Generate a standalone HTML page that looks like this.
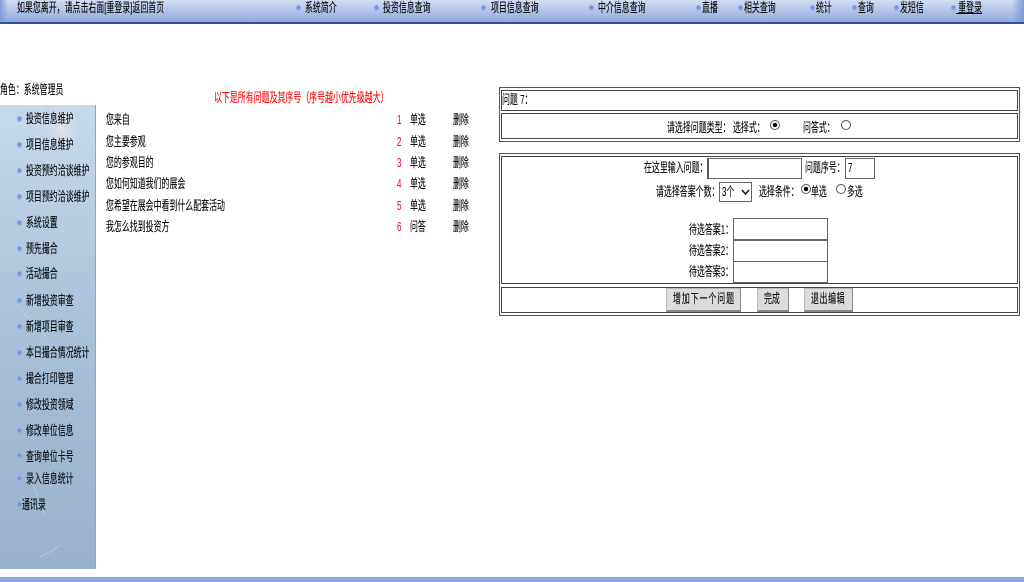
<!DOCTYPE html>
<html lang="zh"><head><meta charset="utf-8"><title>问题</title>
<style>
html,body{margin:0;padding:0;width:1024px;height:582px;overflow:hidden;background:#fff}
body{position:relative;font-family:"Liberation Sans","Noto Sans CJK SC",sans-serif;color:#000}
.t{position:absolute;white-space:nowrap;font-size:13px;line-height:14px;transform-origin:0 50%;transform:scaleX(.61);-webkit-text-stroke:.1px currentColor}
.d{position:absolute;width:5px;height:6px;border-radius:50%;background:radial-gradient(circle at 50% 40%,#6a84dc,#b4c6ec)}
.b{position:absolute;box-sizing:border-box;border:1px solid #444;background:#fff}
.o{position:absolute;box-sizing:border-box;border:1px solid #555}
.i{position:absolute;box-sizing:border-box;background:#fff;border:1px solid #666}
.btn{position:absolute;box-sizing:border-box;background:#dcdcdc;border:1px solid #bbb;border-bottom:2px solid #888;border-right:1px solid #888}
.r{position:absolute;width:10px;height:10px;box-sizing:border-box;border:1px solid #555;border-radius:50%;background:#fff}
.r.c::after{content:"";position:absolute;left:2px;top:2px;width:4px;height:4px;border-radius:50%;background:#000;box-shadow:0 0 1px #000}
</style></head><body>
<div style="position:absolute;left:0;top:0;width:1024px;height:22px;background:linear-gradient(#d3def3,#b4c5ea 45%,#93aade)"></div>
<div style="position:absolute;left:0;top:0;width:8px;height:22px;background:linear-gradient(90deg,#7f9ad8,transparent)"></div>
<div style="position:absolute;left:1012px;top:0;width:12px;height:22px;background:linear-gradient(270deg,#7f9ad8,transparent)"></div>
<div style="position:absolute;left:0;top:22px;width:1024px;height:2px;background:#2f4f9f"></div>
<span class="t" style="left:17px;top:1px">如果您离开，请点击右面[重登录]返回首页</span>
<i class="d" style="left:296px;top:5px"></i><span class="t" style="left:305px;top:1px">系统简介</span>
<i class="d" style="left:374px;top:5px"></i><span class="t" style="left:383px;top:1px">投资信息查询</span>
<i class="d" style="left:481px;top:5px"></i><span class="t" style="left:491px;top:1px">项目信息查询</span>
<i class="d" style="left:589px;top:5px"></i><span class="t" style="left:598px;top:1px">中介信息查询</span>
<i class="d" style="left:696px;top:5px"></i><span class="t" style="left:702px;top:1px">直播</span>
<i class="d" style="left:738px;top:5px"></i><span class="t" style="left:744px;top:1px">相关查询</span>
<i class="d" style="left:810px;top:5px"></i><span class="t" style="left:816px;top:1px">统计</span>
<i class="d" style="left:852px;top:5px"></i><span class="t" style="left:858px;top:1px">查询</span>
<i class="d" style="left:894px;top:5px"></i><span class="t" style="left:900px;top:1px">发短信</span>
<i class="d" style="left:951px;top:5px"></i><span class="t" style="left:956px;top:1px"><u>&nbsp;重登录</u></span>

<span class="t" style="left:0;top:83px">角色：系统管理员</span>
<span class="t" style="left:214px;top:91px;color:#f00">以下是所有问题及其序号（序号越小优先级越大）</span>

<div style="position:absolute;left:0;top:105px;width:96px;height:464px;background:radial-gradient(ellipse 16px 24px at 62px 22px,rgba(240,225,228,.75),transparent),linear-gradient(#c7daec,#a9c2da 45%,#98b1cd);border-right:1px solid #8ea8c4;box-sizing:border-box"></div>
<svg style="position:absolute;left:0;top:105px" width="96" height="464" viewBox="0 0 96 464" fill="none" stroke="#d8e6f2" stroke-opacity=".4"><path d="M0 25C12 18 22 22 32 12M38 0C46 10 50 14 62 18M68 30C72 42 78 48 84 58"/><path d="M22 205C30 218 38 222 46 232M30 370C34 385 40 395 44 410M40 452C46 448 54 446 60 440"/></svg>
<i class="d" style="left:17px;top:116px"></i><span class="t" style="left:26px;top:112px">投资信息维护</span>
<i class="d" style="left:17px;top:142px"></i><span class="t" style="left:26px;top:138px">项目信息维护</span>
<i class="d" style="left:17px;top:168px"></i><span class="t" style="left:26px;top:164px">投资预约洽谈维护</span>
<i class="d" style="left:17px;top:194px"></i><span class="t" style="left:26px;top:190px">项目预约洽谈维护</span>
<i class="d" style="left:17px;top:220px"></i><span class="t" style="left:26px;top:216px">系统设置</span>
<i class="d" style="left:17px;top:246px"></i><span class="t" style="left:26px;top:242px">预先撮合</span>
<i class="d" style="left:17px;top:271px"></i><span class="t" style="left:26px;top:267px">活动撮合</span>
<i class="d" style="left:17px;top:298px"></i><span class="t" style="left:26px;top:294px">新增投资审查</span>
<i class="d" style="left:17px;top:324px"></i><span class="t" style="left:26px;top:320px">新增项目审查</span>
<i class="d" style="left:17px;top:350px"></i><span class="t" style="left:26px;top:346px">本日撮合情况统计</span>
<i class="d" style="left:17px;top:376px"></i><span class="t" style="left:26px;top:372px">撮合打印管理</span>
<i class="d" style="left:17px;top:402px"></i><span class="t" style="left:26px;top:398px">修改投资领域</span>
<i class="d" style="left:17px;top:428px"></i><span class="t" style="left:26px;top:424px">修改单位信息</span>
<i class="d" style="left:17px;top:453px"></i><span class="t" style="left:26px;top:450px">查询单位卡号</span>
<i class="d" style="left:17px;top:476px"></i><span class="t" style="left:26px;top:472px">录入信息统计</span>
<i class="d" style="left:17px;top:502px"></i><span class="t" style="left:22px;top:498px">通讯录</span>

<span class="t" style="left:106px;top:113px">您来自</span>
<span class="t" style="left:106px;top:135px">您主要参观</span>
<span class="t" style="left:106px;top:156px">您的参观目的</span>
<span class="t" style="left:106px;top:177px">您如何知道我们的展会</span>
<span class="t" style="left:106px;top:199px">您希望在展会中看到什么配套活动</span>
<span class="t" style="left:106px;top:220px">我怎么找到投资方</span>

<span class="t" style="left:397px;top:113px;color:#f03">1</span><span class="t" style="left:410px;top:113px">单选</span><span class="t" style="left:453px;top:113px">删除</span>
<span class="t" style="left:397px;top:135px;color:#f03">2</span><span class="t" style="left:410px;top:135px">单选</span><span class="t" style="left:453px;top:135px">删除</span>
<span class="t" style="left:397px;top:156px;color:#f03">3</span><span class="t" style="left:410px;top:156px">单选</span><span class="t" style="left:453px;top:156px">删除</span>
<span class="t" style="left:397px;top:177px;color:#f03">4</span><span class="t" style="left:410px;top:177px">单选</span><span class="t" style="left:453px;top:177px">删除</span>
<span class="t" style="left:397px;top:199px;color:#f03">5</span><span class="t" style="left:410px;top:199px">单选</span><span class="t" style="left:453px;top:199px">删除</span>
<span class="t" style="left:397px;top:220px;color:#f03">6</span><span class="t" style="left:410px;top:220px">问答</span><span class="t" style="left:453px;top:220px">删除</span>

<div class="o" style="left:499px;top:87px;width:521px;height:55px"></div>
<div class="b" style="left:501px;top:90px;width:517px;height:21px"></div>
<div class="b" style="left:501px;top:113px;width:517px;height:26px"></div>
<span class="t" style="left:502px;top:93px">问题 7：</span>
<span class="t" style="left:667px;top:121px">请选择问题类型：</span>
<span class="t" style="left:733px;top:121px">选择式：</span>
<span class="r c" style="left:770px;top:120px"></span>
<span class="t" style="left:803px;top:121px">问答式：</span>
<span class="r" style="left:841px;top:120px"></span>

<div class="o" style="left:499px;top:153px;width:521px;height:163px"></div>
<div class="b" style="left:501px;top:156px;width:517px;height:128px"></div>
<div class="b" style="left:501px;top:287px;width:517px;height:26px"></div>

<span class="t" style="left:644px;top:161px">在这里输入问题：</span>
<div class="i" style="left:707px;top:158px;width:95px;height:21px;border-left:2px solid #555"></div>
<span class="t" style="left:805px;top:161px">问题序号：</span>
<div class="i" style="left:845px;top:158px;width:30px;height:21px"></div>
<span class="t" style="left:848px;top:161px">7</span>

<span class="t" style="left:656px;top:185px">请选择答案个数：</span>
<div class="i" style="left:719px;top:182px;width:33px;height:20px"></div>
<span class="t" style="left:722px;top:185px">3个</span>
<svg style="position:absolute;left:741px;top:189px" width="9" height="6" viewBox="0 0 9 6"><path d="M1 1L4.500 5L8 1" fill="none" stroke="#111" stroke-width="1.500"/></svg>
<span class="t" style="left:759px;top:185px">选择条件：</span>
<span class="r c" style="left:801px;top:184px"></span><span class="t" style="left:811px;top:185px">单选</span>
<span class="r" style="left:836px;top:184px"></span><span class="t" style="left:847px;top:185px">多选</span>

<span class="t" style="left:689px;top:223px">待选答案1：</span>
<div class="i" style="left:733px;top:218px;width:95px;height:22px"></div>
<span class="t" style="left:689px;top:244px">待选答案2：</span>
<div class="i" style="left:733px;top:240px;width:95px;height:22px"></div>
<span class="t" style="left:689px;top:265px">待选答案3：</span>
<div class="i" style="left:733px;top:261px;width:95px;height:22px"></div>

<div class="btn" style="left:666px;top:288px;width:75px;height:24px"></div>
<span class="t" style="left:673px;top:292px;letter-spacing:1.500px">增加下一个问题</span>
<div class="btn" style="left:757px;top:288px;width:32px;height:24px"></div>
<span class="t" style="left:764px;top:292px">完成</span>
<div class="btn" style="left:804px;top:288px;width:49px;height:24px"></div>
<span class="t" style="left:811px;top:292px;letter-spacing:1px">退出编辑</span>

<div style="position:absolute;left:0;top:577px;width:1024px;height:5px;background:#8ea9e2"></div>
</body></html>
